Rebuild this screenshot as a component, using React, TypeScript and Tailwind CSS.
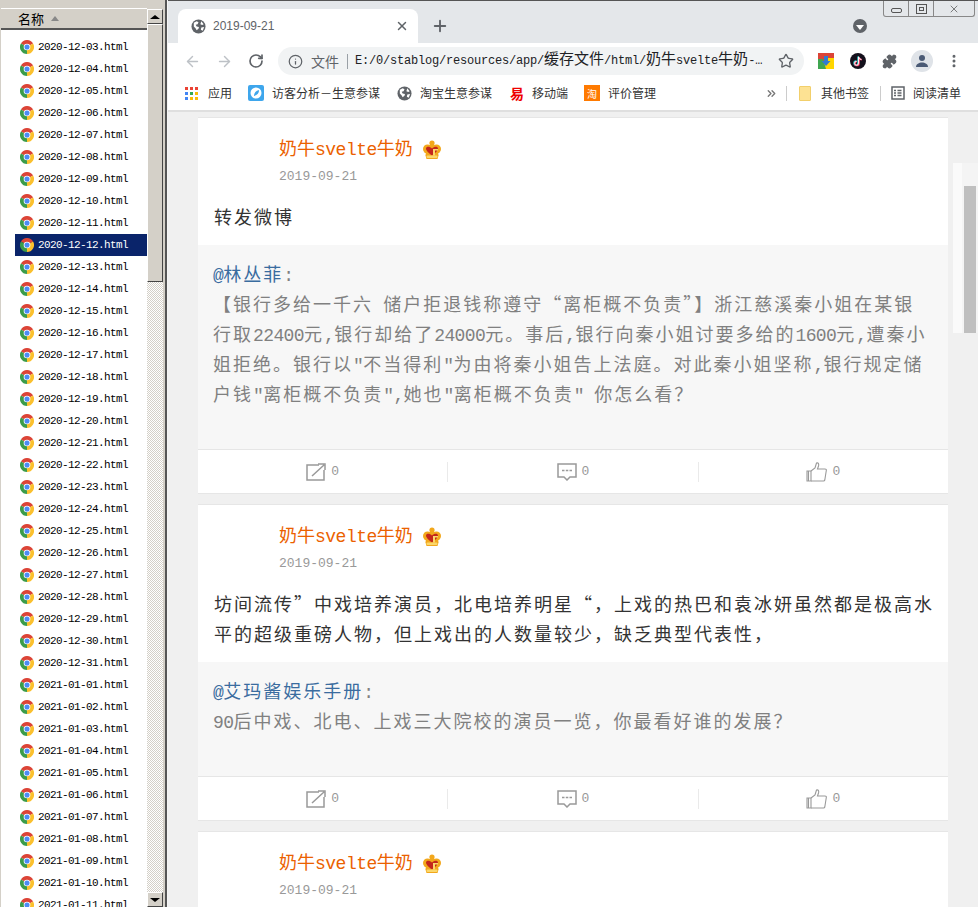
import { Info, Star, Plus, X, ArrowLeft, ArrowRight, RotateCw, MoreVertical, Puzzle, ChevronsRight } from "lucide-react";
import type { ReactNode } from "react";

const mono = "font-['Liberation_Mono','Noto_Sans_CJK_SC',monospace]";
const cjkFont = "font-['Noto_Sans_CJK_SC',sans-serif]";

function dateRange() {
  const out: string[] = [];
  for (let d = 3; d <= 31; d++) out.push(`2020-12-${String(d).padStart(2, "0")}.html`);
  for (let d = 1; d <= 11; d++) out.push(`2021-01-${String(d).padStart(2, "0")}.html`);
  return out;
}

// the reference's font has half-width latin and spaced-out hanzi, so split the runs
function Mixed({ text, cjk, latin }: { text: string; cjk: string; latin: string }) {
  const runs = text.split(/([\x00-\x7f]+)/).filter(Boolean);
  return (
    <>
      {runs.map((run, i) =>
        /^[\x00-\x7f]/.test(run) ? (
          <span key={i} className={`${mono} leading-[0] ${latin}`}>{run}</span>
        ) : (
          <span key={i} lang="zh-CN" className={`${cjkFont} leading-[0] ${cjk}`}>{run}</span>
        )
      )}
    </>
  );
}

const ChromeIcon = () => (
  <svg width="14" height="14" viewBox="0 0 16 16" className="shrink-0">
    <path d="M8 8L1.07 4A8 8 0 0 1 14.93 4z" fill="#dc4437" />
    <path d="M8 8L14.93 4A8 8 0 0 1 8 16z" fill="#fbc02d" />
    <path d="M8 8L8 16A8 8 0 0 1 1.07 4z" fill="#3b9c4b" />
    <circle cx="8" cy="8" r="3.8" fill="#fff" />
    <circle cx="8" cy="8" r="2.9" fill="#4c8bf5" />
  </svg>
);

const Globe = ({ size = 15 }: { size?: number }) => (
  <svg width={size} height={size} viewBox="0 0 16 16" className="shrink-0">
    <circle cx="8" cy="8" r="7.5" fill="#5f6368" />
    <path d="M3 4l3-1.5 2 1-1 2-2 .5 1 2 2.5.5-.5 2-2 1.5-1-2-2-2zM11 2.5l2.5 3-1.500 1-2-1zM11 9l3-.5-1.5 4-2-1z" fill="#fff" />
  </svg>
);

const Crown = () => (
  <svg width="18" height="20" viewBox="0 0 18 20" className="shrink-0">
    <circle cx="9" cy="3" r="2.6" fill="#f2a71b" />
    <circle cx="4.500" cy="9" r="4.500" fill="#f2a71b" />
    <circle cx="13.500" cy="9" r="4.500" fill="#f2a71b" />
    <path d="M4 5h10l1.500 10.500-1 3.500h-11l-1-3.500z" fill="#f2a71b" />
    <path d="M3 8.500c0-2 3.500-2.500 6 0 2.500-2.500 6-2 6 0 0 2.500-3.500 5-6 7-2.500-2-6-4.500-6-7z" fill="#c4261b" />
    <path d="M10 9h5v1.500h-3v5h-2z" fill="#fbd76b" />
    <rect x="3.500" y="15.500" width="11" height="2.500" rx="1" fill="#fbd76b" />
  </svg>
);

const ShareIcon = () => (
  <svg width="20" height="18" viewBox="0 0 20 18" fill="none" stroke="#999" strokeWidth="1.5">
    <path d="M13 2H1v15h17V7" />
    <path d="M6 13L18 2M12 1h7v6" />
  </svg>
);

const CommentIcon = () => (
  <svg width="20" height="18" viewBox="0 0 20 18" fill="none" stroke="#999" strokeWidth="1.5">
    <path d="M1 1h18v13h-6l-3 3-3-3H1z" />
    <path d="M5 7.500h2.500M8.800 7.500h2.500M12.500 7.500H15" />
  </svg>
);

const ThumbIcon = () => (
  <svg width="21" height="20" viewBox="0 0 21 20" fill="none" stroke="#999" strokeWidth="1.1">
    <path d="M1 9h4v10H1zM2.500 9v10" />
    <path d="M5 9l4-3 1.500-5c2-.5 2.500 1 2 3l-1 3h7.500c1 0 1.500.5 1.300 1.500l-1.500 9.500c-.2.7-.7 1-1.300 1H5" />
  </svg>
);

function Action({ icon }: { icon: ReactNode }) {
  return (
    <div className="flex flex-1 items-center justify-center gap-[5px] text-[13px] text-[#999]">
      {icon}
      <span>0</span>
    </div>
  );
}

function ActionBar() {
  return (
    <div className="flex h-[45px] items-center border-t border-b border-[#e6e6e6] bg-white">
      <Action icon={<ShareIcon />} />
      <div className="h-[20px] w-px bg-[#eaeaea]" />
      <Action icon={<CommentIcon />} />
      <div className="h-[20px] w-px bg-[#eaeaea]" />
      <Action icon={<ThumbIcon />} />
    </div>
  );
}

function Author() {
  return (
    <div className="pl-[81px]">
      <div className="flex h-[24px] items-center gap-[10px] text-[18px] leading-[24px] text-[#eb6100]">
        <span>
          <Mixed text="奶牛svelte牛奶" cjk="" latin="tracking-[-0.5px]" />
        </span>
        <Crown />
      </div>
      <div className="mt-[5px] text-[13px] leading-[20px] text-[#999]">2019-09-21</div>
    </div>
  );
}

function Post({ text, at, quote, quoteH }: { text: string; at: string; quote: string; quoteH: string }) {
  return (
    <div className="mb-[10px] border-t border-[#e6e6e6] bg-white">
      <div className="pt-[20px]">
        <Author />
        <div className="pl-[16px] pr-[14px] pt-[17px] pb-[11px] text-[18px] leading-[30px] text-[#333]">
          <Mixed text={text} cjk="tracking-[2px]" latin="tracking-[-0.6px]" />
        </div>
      </div>
      <div className={`bg-[#f7f7f7] px-[15px] pt-[17px] text-[18px] leading-[30px] text-[#808080] ${quoteH}`}>
        <div className="-mt-[1px]">
          <span className="text-[#3a6c9f]">
            <Mixed text={`@${at}`} cjk="tracking-[2px]" latin="tracking-[-0.6px]" />
          </span>
          :
        </div>
        <div>
          <Mixed text={quote} cjk="tracking-[2px]" latin="tracking-[-0.6px]" />
        </div>
      </div>
      <ActionBar />
    </div>
  );
}

function FilePanel() {
  return (
    <div className="flex h-[907px] w-[168px] shrink-0 overflow-hidden bg-[#d4d0c8]">
      <div className="flex w-[147px] shrink-0 flex-col pl-px pt-[8px]">
        <div className="flex h-[22px] shrink-0 items-center border-t border-white border-b-2 border-b-[#555] bg-[#d4d0c8] pl-[17px] text-[13px] text-black">
          <span className={cjkFont}>名称</span>
          <span className="ml-[7px] h-0 w-0 border-x-[4px] border-b-[5px] border-x-transparent border-b-[#888]" />
        </div>
        <div className="min-h-0 flex-1 overflow-hidden bg-white pt-[6px]">
          {dateRange().map((name) => (
            <div
              key={name}
              className={`ml-[14px] flex h-[22px] items-center gap-[4px] pl-[5px] ${name === "2020-12-12.html" ? "bg-[#0a246a] text-white" : "text-black"}`}
            >
              <ChromeIcon />
              <span className={`${mono} text-[11px] tracking-[-0.6px]`}>{name}</span>
            </div>
          ))}
        </div>
      </div>
      <div className="flex w-[16px] shrink-0 flex-col pt-[9px]">
        <div className="flex h-[15px] shrink-0 items-center justify-center border border-white border-r-[#444] border-b-[#444] bg-[#d4d0c8]">
          <span className="h-0 w-0 border-x-[5px] border-b-[4px] border-x-transparent border-b-black" />
        </div>
        <div className="h-[258px] shrink-0 border border-white border-r-[#444] border-b-[#444] bg-[#d4d0c8]" />
        <div className="flex-1 bg-[repeating-conic-gradient(#d4d0c8_0_25%,#ffffff_0_50%)] bg-[length:2px_2px]" />
        <div className="flex h-[15px] shrink-0 items-center justify-center border border-white border-r-[#444] border-b-[#444] bg-[#d4d0c8]">
          <span className="h-0 w-0 border-x-[5px] border-t-[4px] border-x-transparent border-t-black" />
        </div>
      </div>
      <div className="ml-[2px] h-full w-[2px] shrink-0 bg-[#555]" />
      <div className="h-full w-px shrink-0 bg-[#f4f4f4]" />
    </div>
  );
}

function Bookmark({ icon, label }: { icon: ReactNode; label: string }) {
  return (
    <div className={`flex items-center gap-[8px] text-[12px] text-[#333] ${cjkFont}`}>
      {icon}
      <span>{label}</span>
    </div>
  );
}

function BrowserTop() {
  return (
    <div className="shrink-0">
      <div className="relative h-[43px] border-t border-[#555] bg-[#e4e7ea] pl-[10px] pt-[8px]">
        <div className="flex h-[34px] w-[240px] items-center rounded-t-[8px] bg-white pl-[13px] pr-[9px]">
          <Globe />
          <span className="ml-[7px] flex-1 font-['Liberation_Sans',sans-serif] text-[12px] text-[#5f6368]">2019-09-21</span>
          <X size={14} strokeWidth={2.5} className="text-[#5f6368]" />
        </div>
        <Plus size={18} strokeWidth={2.5} className="absolute left-[263px] top-[16px] text-[#5f6368]" />
        <div className="absolute left-[685px] top-[18px] flex h-[14px] w-[14px] items-center justify-center rounded-full bg-[#5f6368]">
          <span className="mt-[2px] h-0 w-0 border-x-[4px] border-t-[5px] border-x-transparent border-t-white" />
        </div>
        <div className="absolute right-[3px] top-0 flex h-[16px] w-[92px] rounded-b-[3px] border border-t-0 border-[#888]">
          <div className="flex w-[25px] items-center justify-center border-r border-[#888]">
            <span className="mt-[3px] h-[5px] w-[11px] rounded-[2px] border border-[#555]" />
          </div>
          <div className="flex w-[25px] items-center justify-center border-r border-[#888]">
            <span className="flex h-[10px] w-[11px] items-center justify-center border border-[#555]">
              <span className="h-[4px] w-[5px] border border-[#555]" />
            </span>
          </div>
          <div className="flex flex-1 items-center justify-center">
            <X size={12} strokeWidth={1.5} className="text-[#555]" />
          </div>
        </div>
      </div>
      <div className="flex h-[36px] items-center bg-white pl-[16px]">
        <ArrowLeft size={17} strokeWidth={2} className="text-[#bdc1c6]" />
        <ArrowRight size={17} strokeWidth={2} className="ml-[15px] text-[#bdc1c6]" />
        <RotateCw size={16} strokeWidth={2.5} className="ml-[15px] text-[#5f6368]" />
        <div className="ml-[14px] flex h-[28px] w-[526px] items-center rounded-full bg-[#f1f3f4] pl-[10px] pr-[10px]">
          <Info size={15} strokeWidth={2} className="shrink-0 text-[#5f6368]" />
          <span className={`ml-[8px] shrink-0 text-[14px] text-[#5f6368] ${cjkFont}`}>文件</span>
          <span className="mx-[8px] h-[15px] w-px shrink-0 bg-[#9aa0a6]" />
          <span className="-ml-px min-w-0 flex-1 whitespace-nowrap text-[15px] text-[#202124]">
            <Mixed text="E:/0/stablog/resources/app/缓存文件/html/奶牛svelte牛奶" cjk="" latin="text-[12px] tracking-[-0.2px]" />
            <span className={`${mono} text-[12px] leading-[0]`}>-…</span>
          </span>
          <Star size={16} strokeWidth={2} className="ml-[14px] shrink-0 text-[#5f6368]" />
        </div>
        <svg width="16" height="16" viewBox="0 0 16 16" className="ml-[14px] shrink-0">
          <rect width="16" height="16" fill="#ffd600" />
          <path d="M0 0h16v5H8L4 16H0z" fill="#db4437" />
          <path d="M0 6h5l3 10H0z" fill="#3fa650" />
          <path d="M6 3h4v5h2.500L8 13 3.500 8H6z" fill="#2f7bd0" />
        </svg>
        <svg width="16" height="16" viewBox="0 0 16 16" fill="none" strokeWidth="1.7" className="ml-[16px] shrink-0">
          <circle cx="8" cy="8" r="8" fill="#14101c" />
          <path d="M8.200 3.500v6.500a2 2 0 1 1-2-2M8.200 3.500c0 1.600 1.300 2.700 2.800 2.700" stroke="#38e6e6" />
          <path d="M9 4v6.500a2 2 0 1 1-2-2M9 4c0 1.600 1.300 2.700 2.800 2.700" stroke="#f0325a" />
          <path d="M8.600 3.800v6.500a2 2 0 1 1-2-2M8.600 3.800c0 1.600 1.300 2.700 2.800 2.700" stroke="#fff" strokeWidth="1" />
        </svg>
        <Puzzle size={15} fill="#5f6368" className="ml-[16px] shrink-0 text-[#5f6368]" />
        <div className="ml-[14px] flex h-[22px] w-[22px] shrink-0 items-center justify-center rounded-full bg-[#dfe3e8]">
          <svg width="14" height="14" viewBox="0 0 14 14" fill="#4a5a75">
            <circle cx="7" cy="4" r="3" />
            <path d="M1 13c0-3 3-4.500 6-4.500s6 1.500 6 4.500z" />
          </svg>
        </div>
        <MoreVertical size={16} strokeWidth={2.5} className="ml-[13px] shrink-0 text-[#5f6368]" />
      </div>
      <div className="flex h-[33px] items-center border-b-2 border-[#dfdfdf] bg-white pb-[3px] pl-[17px] pr-[17px]">
        <div className={`flex items-center gap-[10px] text-[12px] text-[#333] ${cjkFont}`}>
          <span className="grid h-[13px] w-[13px] shrink-0 grid-cols-3 gap-[2px]">
            {["#ea4335", "#ea4335", "#ea4335", "#4285f4", "#34a853", "#fbbc05", "#4285f4", "#fbbc05", "#fbbc05"].map((c, i) => (
              <span key={i} className="h-[3px] w-[3px]" style={{ background: c }} />
            ))}
          </span>
          <span>应用</span>
        </div>
        <div className="ml-[16px]">
          <Bookmark
            icon={
              <svg width="16" height="16" viewBox="0 0 16 16" className="shrink-0">
                <rect width="16" height="16" rx="2" fill="#3ea6ec" />
                <circle cx="8" cy="8" r="5.500" fill="#fff" />
                <path d="M11 5c.2 3-1.500 5-5 6 0-3 2-5.500 5-6z" fill="#3ea6ec" />
              </svg>
            }
            label="访客分析－生意参谋"
          />
        </div>
        <div className="ml-[17px]">
          <Bookmark icon={<Globe />} label="淘宝生意参谋" />
        </div>
        <div className="ml-[18px]">
          <Bookmark icon={<span className="w-[14px] text-center text-[14px] font-bold leading-none text-[#e00]">易</span>} label="移动端" />
        </div>
        <div className="ml-[16px]">
          <Bookmark icon={<span className="flex h-[16px] w-[16px] items-center justify-center bg-[#ff7a00] text-[10px] text-white">淘</span>} label="评价管理" />
        </div>
        <ChevronsRight size={13} strokeWidth={2.5} className="ml-auto text-[#777]" />
        <span className="ml-[8px] h-[15px] w-px bg-[#ccc]" />
        <div className="ml-[12px]">
          <Bookmark icon={<span className="mr-[2px] h-[15px] w-[12px] rounded-[1px] border border-[#f2cf6b] bg-[#fde293]" />} label="其他书签" />
        </div>
        <span className="ml-[11px] h-[15px] w-px bg-[#ccc]" />
        <div className="ml-[10px]">
          <Bookmark
            icon={
              <svg width="14" height="14" viewBox="0 0 14 14" fill="none" stroke="#5f6368" strokeWidth="1.5" className="shrink-0">
                <rect x="1" y="1" width="12" height="12" />
                <path d="M3 4.500h2M6.500 4.500h4M3 7h2M6.500 7h4M3 9.500h2M6.500 9.500h4" />
              </svg>
            }
            label="阅读清单"
          />
        </div>
      </div>
    </div>
  );
}

export default function App() {
  return (
    <div className="flex h-[907px] w-[978px] overflow-hidden bg-[#f0f0f0] font-['Liberation_Mono','Noto_Sans_CJK_SC',monospace]">
      <FilePanel />
      <div className="flex min-w-0 flex-1 flex-col">
        <BrowserTop />
        <div className="relative min-h-0 flex-1 overflow-hidden pl-[30px] pr-[30px] pt-[5px]">
          <Post
            text="转发微博"
            at="林丛菲"
            quoteH="h-[204px]"
            quote={'【银行多给一千六 储户拒退钱称遵守“离柜概不负责”】浙江慈溪秦小姐在某银行取22400元,银行却给了24000元。事后,银行向秦小姐讨要多给的1600元,遭秦小姐拒绝。银行以"不当得利"为由将秦小姐告上法庭。对此秦小姐坚称,银行规定储户钱"离柜概不负责",她也"离柜概不负责" 你怎么看？'}
          />
          <Post
            text="坊间流传”中戏培养演员，北电培养明星“，上戏的热巴和袁冰妍虽然都是极高水平的超级重磅人物，但上戏出的人数量较少，缺乏典型代表性，"
            at="艾玛酱娱乐手册"
            quoteH="h-[114px]"
            quote="90后中戏、北电、上戏三大院校的演员一览，你最看好谁的发展？"
          />
          <div className="h-[100px] border-t border-[#e6e6e6] bg-white pt-[20px]">
            <Author />
          </div>
          <div className="absolute right-[16px] top-[51px] h-[170px] w-[9px] bg-[#fafafa]" />
          <div className="absolute right-0 top-[51px] h-[170px] w-[16px] bg-[#f4f4f4]" />
          <div className="absolute right-[2px] top-[74px] h-[147px] w-[12px] bg-[#bfbfbf]" />
        </div>
      </div>
    </div>
  );
}
